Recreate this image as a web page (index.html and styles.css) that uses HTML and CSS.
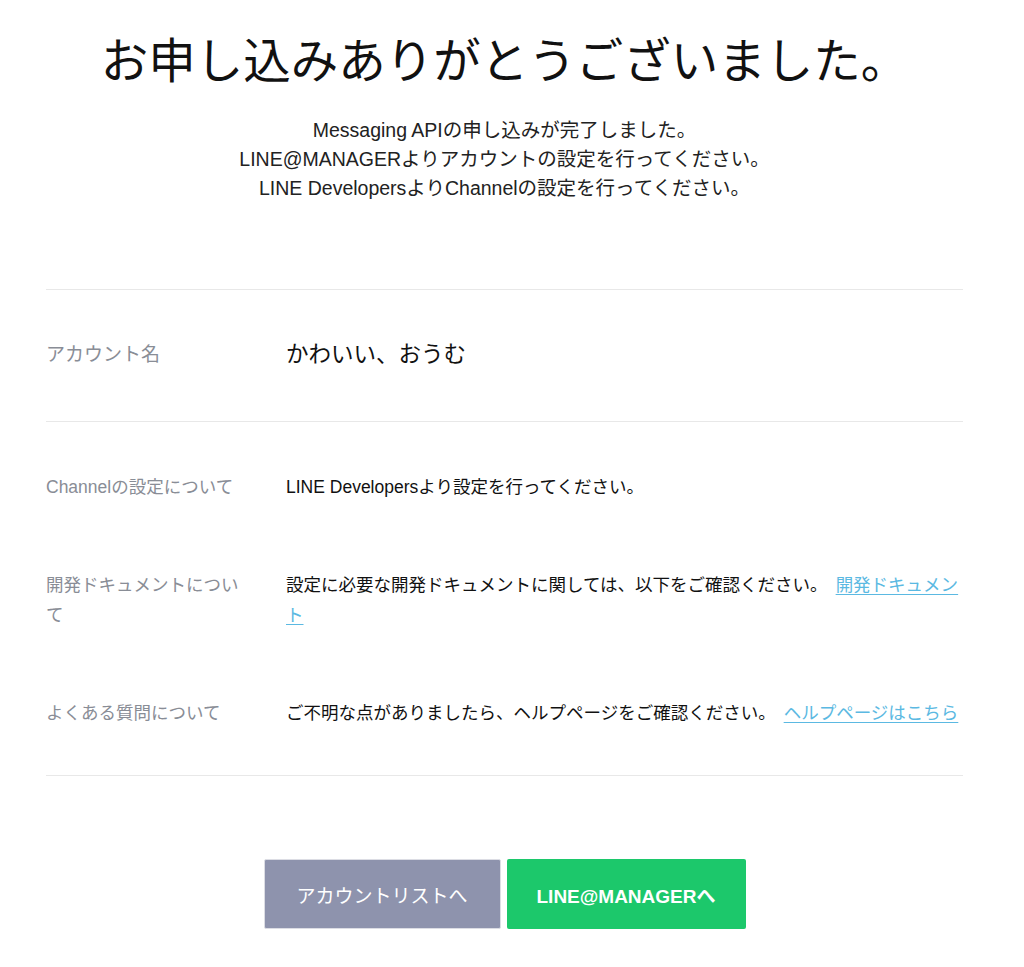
FILE: index.html
```html
<!DOCTYPE html>
<html lang="ja">
<head>
    <meta charset="UTF-8">
    <meta name="viewport" content="width=device-width, initial-scale=1.0">
    <title>お申し込み完了</title>
    <link rel="stylesheet" href="styles.css">
</head>
<body>
    <main class="page">
        <h1 class="title">お申し込みありがとうございました。</h1>
        <p class="lead">
            Messaging APIの申し込みが完了しました。<br>
            LINE@MANAGERよりアカウントの設定を行ってください。<br>
            LINE DevelopersよりChannelの設定を行ってください。
        </p>

        <section class="account">
            <div class="row">
                <div class="label">アカウント名</div>
                <div class="value">かわいい、おうむ</div>
            </div>
        </section>

        <section class="details">
            <div class="row">
                <div class="label">Channelの設定について</div>
                <div class="value">LINE Developersより設定を行ってください。</div>
            </div>
            <div class="row">
                <div class="label">開発ドキュメントについて</div>
                <div class="value">設定に必要な開発ドキュメントに関しては、以下をご確認ください。<a class="link" href="#">開発ドキュメント</a></div>
            </div>
            <div class="row">
                <div class="label">よくある質問について</div>
                <div class="value">ご不明な点がありましたら、ヘルプページをご確認ください。<a class="link" href="#">ヘルプページはこちら</a></div>
            </div>
        </section>

        <div class="actions">
            <a class="button button-gray" href="#">アカウントリストへ</a>
            <a class="button button-green" href="#">LINE@MANAGERへ</a>
        </div>
    </main>
</body>
</html>
```

FILE: styles.css
```css
body {
    margin: 0;
    background: #fff;
    color: #111;
    font-family: "Liberation Sans", "Noto Sans CJK JP", sans-serif;
}
.page {
    width: 917px;
    margin-left: 46px;
    padding-bottom: 36px;
}
.title {
    margin: 30px 0 0;
    font-size: 47.5px;
    font-weight: normal;
    line-height: 64px;
    text-align: center;
    white-space: nowrap;
}
.lead {
    margin: 22px 0 86px;
    font-size: 19.5px;
    line-height: 29px;
    color: #222;
    text-align: center;
}
.account {
    border-top: 1px solid #e8e8e8;
    border-bottom: 1px solid #e8e8e8;
    padding: 49px 0 50px;
}
.row {
    display: grid;
    grid-template-columns: 240px 1fr;
    font-size: 17.5px;
    line-height: 30px;
}
.label {
    max-width: 200px;
    color: #898d96;
}
.account .row {
    line-height: 32px;
}
.account .label {
    font-size: 19px;
}
.account .value {
    font-size: 22.5px;
}
.details {
    border-bottom: 1px solid #e8e8e8;
    padding: 16px 0 13px;
}
.details .row {
    padding: 34px 0;
}
.link {
    margin-left: 8px;
    color: #5bb9e2;
    text-decoration: underline;
    text-underline-offset: 3px;
}
.actions {
    display: flex;
    justify-content: center;
    gap: 6px;
    margin-top: 83px;
}
.button {
    display: flex;
    align-items: center;
    justify-content: center;
    height: 70px;
    box-sizing: border-box;
    border-radius: 2px;
    color: #fff;
    font-size: 19px;
    text-decoration: none;
}
.button-gray {
    width: 237px;
    background: #8e93ad;
    border: 1px solid #dcdde4;
}
.button-green {
    width: 239px;
    background: #1cc86b;
    font-weight: bold;
}
```
